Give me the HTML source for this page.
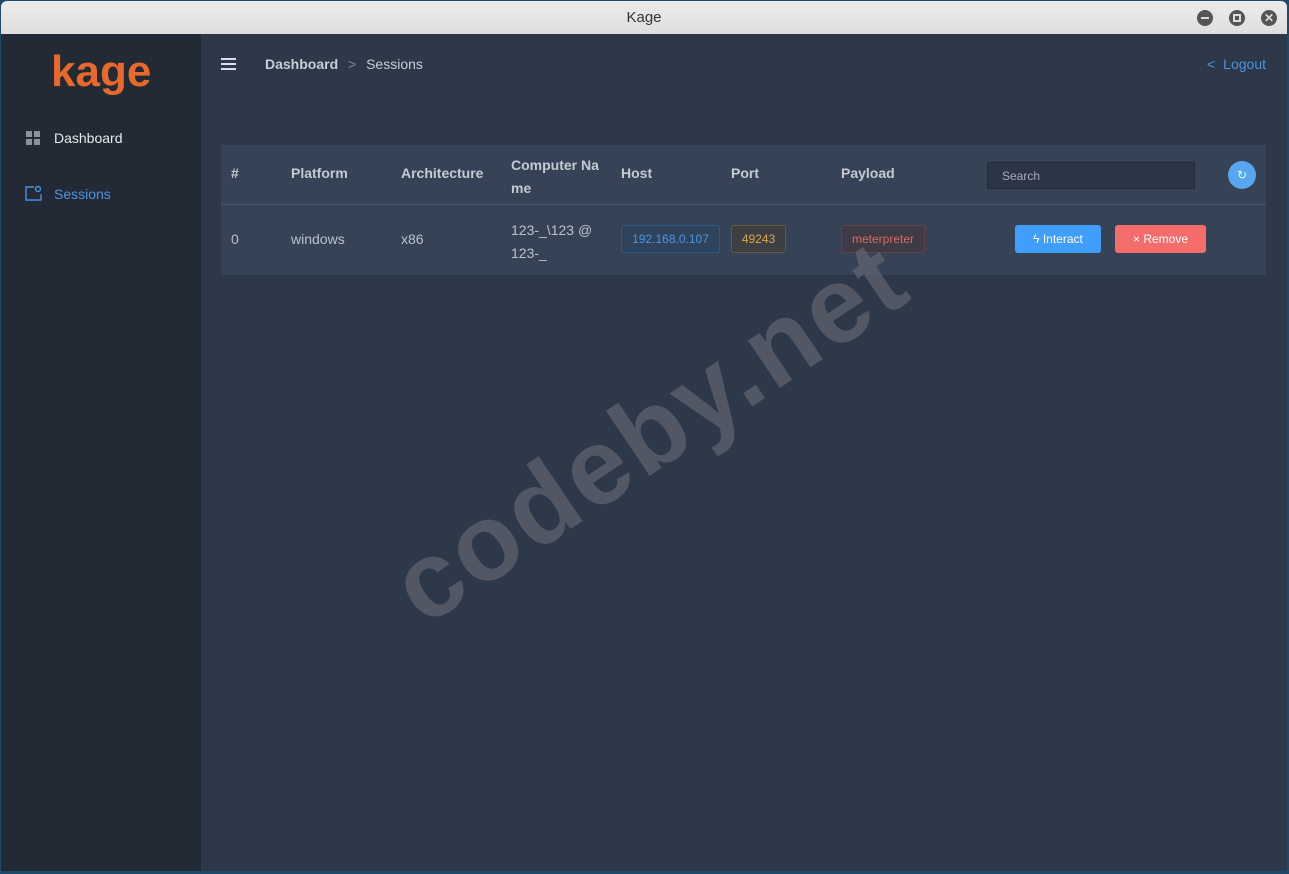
<!DOCTYPE html>
<html><head><style>
*{margin:0;padding:0;box-sizing:border-box}
body{width:1289px;height:874px;overflow:hidden;background:#1d4a6a;font-family:"Liberation Sans",sans-serif;position:relative}
.win{position:absolute;left:1px;top:1px;width:1286px;height:870px;background:#2c3748;border-radius:6px 6px 0 0;overflow:hidden}
.title{position:absolute;left:0;top:0;width:100%;height:33px;background:linear-gradient(#ececec,#dedede);text-align:center;line-height:33px;font-size:15px;color:#333}
.wb{position:absolute;top:9px;width:16px;height:16px;border-radius:50%;background:#555}
.side{position:absolute;left:0;top:33px;width:200px;height:840px;background:#222a35}
.main{position:absolute;left:200px;top:33px;right:0;bottom:0;background:#2d3849}
.nav{position:absolute;left:53px;font-size:14px}
.card{position:absolute;left:20px;top:111px;width:1045px;height:130px;background:#364356}
.th{position:absolute;top:20px;font-size:14px;font-weight:bold;color:#c5cad2}
.td{position:absolute;font-size:14px;color:#bcc2cb}
.tag{position:absolute;top:80px;height:28px;line-height:26px;font-size:12px;border:1px solid;border-radius:3px;text-align:center}
.btn{position:absolute;top:80px;height:28px;line-height:28px;font-size:12px;color:#fff;border-radius:3px;text-align:center}
.wm{position:absolute;left:648px;top:430px;font-size:108px;font-weight:bold;color:rgba(105,110,118,.6);transform:translate(-50%,-50%) rotate(-34deg);white-space:nowrap;letter-spacing:3px}
</style></head><body>
<div class="win">
<div class="title">Kage
<div class="wb" style="left:1196px"><div style="position:absolute;left:4px;top:7px;width:8px;height:2px;background:#ddd"></div></div>
<div class="wb" style="left:1228px"><div style="position:absolute;left:4px;top:4px;width:8px;height:8px;border:2px solid #ddd"></div></div>
<div class="wb" style="left:1260px;color:#ddd;font-size:12px;line-height:16px;font-weight:bold">✕</div>
</div>
<div class="side">
<div style="position:absolute;left:50px;top:14px;font-size:44px;font-weight:bold;color:#e8692a;letter-spacing:0px;line-height:48px">kage</div>
<svg style="position:absolute;left:25px;top:97px" width="14" height="14"><rect x="0" y="0" width="6" height="6" fill="#8a929c"/><rect x="8" y="0" width="6" height="6" fill="#8a929c"/><rect x="0" y="8" width="6" height="6" fill="#8a929c"/><rect x="8" y="8" width="6" height="6" fill="#8a929c"/></svg>
<div class="nav" style="top:96px;color:#e8eaee">Dashboard</div>
<svg style="position:absolute;left:24px;top:151px" width="18" height="16" fill="none" stroke="#4a90d9" stroke-width="1.4"><path d="M9 2H1v13h15V9"/><circle cx="13" cy="4" r="2.5"/></svg>
<div class="nav" style="top:152px;color:#4a95e0">Sessions</div>
</div>
<div class="main">
<svg style="position:absolute;left:20px;top:23px" width="15" height="14" stroke="#dde" stroke-width="2"><path d="M0 2h15M0 7h15M0 12h15"/></svg>
<div style="position:absolute;left:64px;top:22px;font-size:14px;color:#c9ced6"><b>Dashboard</b> <span style="color:#888;margin:0 6px">&gt;</span> Sessions</div>
<div style="position:absolute;right:21px;top:22px;font-size:14px;color:#4a95e0"><span style="margin-right:8px">&lt;</span>Logout</div>
<div class="card">
<div style="position:absolute;left:0;top:59px;width:100%;height:1px;background:#4a576a"></div>
<div class="th" style="left:10px">#</div>
<div class="th" style="left:70px">Platform</div>
<div class="th" style="left:180px">Architecture</div>
<div class="th" style="left:290px;top:9px;line-height:23px;width:92px">Computer Na me</div>
<div class="th" style="left:400px">Host</div>
<div class="th" style="left:510px">Port</div>
<div class="th" style="left:620px">Payload</div>
<div style="position:absolute;left:766px;top:17px;width:208px;height:27px;background:#2b3545;border:1px solid #242c38;border-radius:2px;font-size:12px;color:#aab;line-height:26px;padding-left:14px">Search</div>
<div style="position:absolute;left:1007px;top:16px;width:28px;height:28px;border-radius:50%;background:#57a6ef;color:#dff;font-size:12px;text-align:center;line-height:28px">↻</div>
<div class="td" style="left:10px;top:86px">0</div>
<div class="td" style="left:70px;top:86px">windows</div>
<div class="td" style="left:180px;top:86px">x86</div>
<div class="td" style="left:290px;top:74px;line-height:23px">123-_\123 @<br>123-_</div>
<div class="tag" style="left:400px;width:99px;color:#4a95e0;border-color:#2d5a8a;background:#30435c">192.168.0.107</div>
<div class="tag" style="left:510px;width:55px;color:#d6a64a;border-color:#6b5a3a;background:#3e3f42">49243</div>
<div class="tag" style="left:620px;width:84px;color:#d86a6a;border-color:#6a4048;background:#3e3a46">meterpreter</div>
<div class="btn" style="left:794px;width:86px;background:#409eff">ϟ Interact</div>
<div class="btn" style="left:894px;width:91px;background:#f56c6c">× Remove</div>
</div>
</div>
<div class="wm">codeby.net</div>
</div>
</body></html>
